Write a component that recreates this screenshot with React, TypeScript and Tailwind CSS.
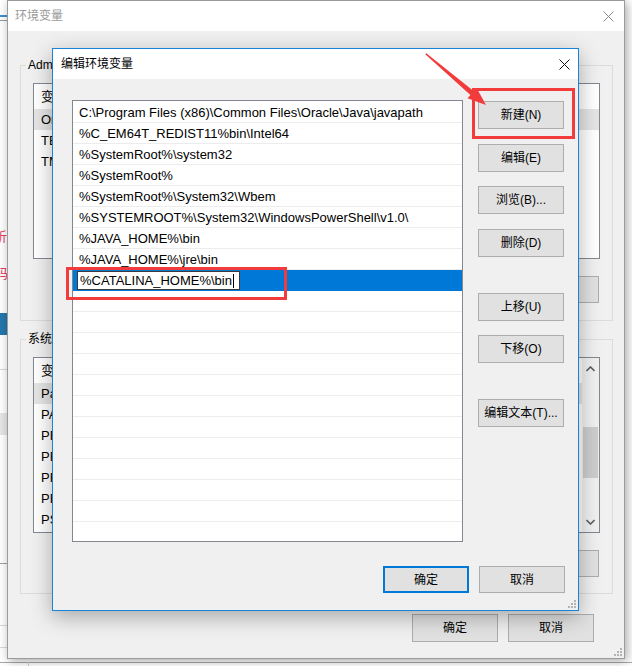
import React from 'react';

const pathRows: string[] = [
  'C:\\Program Files (x86)\\Common Files\\Oracle\\Java\\javapath',
  '%C_EM64T_REDIST11%bin\\Intel64',
  '%SystemRoot%\\system32',
  '%SystemRoot%',
  '%SystemRoot%\\System32\\Wbem',
  '%SYSTEMROOT%\\System32\\WindowsPowerShell\\v1.0\\',
  '%JAVA_HOME%\\bin',
  '%JAVA_HOME%\\jre\\bin',
];

const userVars = ['OneDrive', 'TEMP', 'TMP'];
const sysVars = [
  'Path',
  'PATHEXT',
  'PROCESSOR_ARCHITECTURE',
  'PROCESSOR_IDENTIFIER',
  'PROCESSOR_LEVEL',
  'PROCESSOR_REVISION',
  'PSModulePath',
];

const CloseIcon = ({ color }: { color: string }) => (
  <svg width="11" height="11" viewBox="0 0 11 11">
    <path d="M0.5 0.5 L10.5 10.5 M10.5 0.5 L0.5 10.5" stroke={color} strokeWidth="1" />
  </svg>
);

const Grip = () => (
  <svg width="9" height="9" viewBox="0 0 9 9">
    <rect x="7" y="1" width="2" height="2" fill="#b4b4b4" />
    <rect x="4" y="4" width="2" height="2" fill="#b4b4b4" />
    <rect x="7" y="4" width="2" height="2" fill="#b4b4b4" />
    <rect x="1" y="7" width="2" height="2" fill="#b4b4b4" />
    <rect x="4" y="7" width="2" height="2" fill="#b4b4b4" />
    <rect x="7" y="7" width="2" height="2" fill="#b4b4b4" />
  </svg>
);

const Btn = ({ label, h = 'h-[28px]', primary = false }: { label: string; h?: string; primary?: boolean }) => (
  <div
    className={`flex w-[86px] ${h} items-center justify-center bg-[#e1e1e1] text-[12px] text-black ${
      primary ? 'border-2 border-[#0078d7]' : 'border border-[#adadad]'
    }`}
  >
    {label}
  </div>
);

const VarList = ({ rows, scroll = false }: { rows: string[]; scroll?: boolean }) => (
  <div className="relative mt-[10px] h-[176px] w-[567px] overflow-hidden border border-[#828790] bg-white text-[13px] text-black">
    <div className="flex h-[25px] items-center pl-[7px]">
      <span className="w-[160px]">变量</span>
      <span>值</span>
    </div>
    {rows.map((r, i) => (
      <div key={r} className={`flex h-[21px] items-center pl-[7px] ${i === 0 ? 'bg-[#e5e5e5]' : ''}`}>
        {r}
      </div>
    ))}
    {scroll && (
      <div className="absolute top-0 right-0 bottom-0 flex w-[17px] flex-col items-center bg-[#f0f0f0]">
        <svg className="mt-[8px]" width="9" height="6" viewBox="0 0 9 6">
          <path d="M0.5 5 L4.5 1 L8.5 5" stroke="#606060" strokeWidth="1.6" fill="none" />
        </svg>
        <div className="mt-[55px] h-[51px] w-[15px] bg-[#cdcdcd]" />
        <div className="flex-1" />
        <svg className="mb-[7px]" width="9" height="6" viewBox="0 0 9 6">
          <path d="M0.5 1 L4.5 5 L8.5 1" stroke="#606060" strokeWidth="1.6" fill="none" />
        </svg>
      </div>
    )}
  </div>
);

const OuterButtons = () => (
  <div className="mt-[17px] flex justify-end gap-[10px] pr-[1px]">
    <Btn label="新建(W)..." h="h-[27px]" />
    <Btn label="编辑(I)..." h="h-[27px]" />
    <Btn label="删除(L)" h="h-[27px]" />
  </div>
);

export default function App() {
  const emptyRows = Array.from({ length: 12 });
  return (
    <div className="relative h-[666px] w-[632px] overflow-hidden bg-white font-['Liberation_Sans','Noto_Sans_CJK_SC',sans-serif]">
      {/* bits of the windows behind */}
      <div className="absolute top-[15px] left-0 h-[2px] w-[8px] bg-[#3c8fd6]" />
      <div className="absolute top-[20px] left-0 h-px w-[8px] bg-[#9a9a9a]" />
      <div className="absolute top-0 left-[221px] h-px w-[8px] bg-[#d33]" />
      <div className="absolute top-0 left-[342px] h-px w-[8px] bg-[#d33]" />
      <span className="absolute top-[227px] left-[-6px] text-[13px] text-[#e8385a]">析</span>
      <span className="absolute top-[264px] left-[-5px] text-[13px] text-[#e8385a]">码</span>
      <div className="absolute top-[313px] left-0 h-[22px] w-[8px] bg-[#2478ad]" />
      <div className="absolute top-[369px] left-0 h-px w-[8px] bg-[#d9d9d9]" />
      <div className="absolute top-[413px] left-0 h-[22px] w-[8px] bg-[#e6e6e6]" />
      <div className="absolute top-[563px] left-0 h-px w-[8px] bg-[#a0a0a0]" />
      <div className="absolute top-[625px] left-0 h-px w-[8px] bg-[#d9d9d9]" />
      <div className="absolute top-[647px] left-0 h-px w-[8px] bg-[#d9d9d9]" />
      <div className="absolute top-[662px] left-0 h-px w-[632px] bg-[#a8a8a8]" />
      <div className="absolute top-[662px] left-[28px] h-[4px] w-px bg-[#d0d0d0]" />

      {/* outer window: 环境变量 */}
      <div className="absolute top-0 left-[7px] flex h-[659px] w-[618px] flex-col border border-[#9b9b9b] bg-[#f0f0f0] shadow-[2px_2px_10px_rgba(0,0,0,0.35)]">
        <div className="flex h-[30px] items-center justify-between bg-white pr-[10px] pl-[7px]">
          <span className="text-[12px] text-[#9a9a9a]">环境变量</span>
          <CloseIcon color="#8a8a8a" />
        </div>
        <div className="relative flex flex-1 flex-col pl-[12px]">
          <fieldset className="mt-[26px] w-[592px] border border-[#dcdcdc] px-[12px] pb-[17px]">
            <legend className="ml-[-7px] px-[2px] text-[12px] leading-[16px] text-black">Administrator 的用户变量(U)</legend>
            <VarList rows={userVars} />
            <OuterButtons />
          </fieldset>
          <fieldset className="mt-[10px] w-[592px] border border-[#dcdcdc] px-[12px] pb-[16px]">
            <legend className="ml-[-7px] px-[2px] text-[12px] leading-[16px] text-black">系统变量(S)</legend>
            <VarList rows={sysVars} scroll />
            <OuterButtons />
          </fieldset>
          <div className="mt-[20px] flex justify-end gap-[10px] pr-[30px]">
            <Btn label="确定" />
            <Btn label="取消" />
          </div>
          <div className="absolute right-[2px] bottom-[2px]">
            <Grip />
          </div>
        </div>
      </div>

      {/* inner window: 编辑环境变量 */}
      <div className="absolute top-[48px] left-[52px] flex h-[563px] w-[527px] flex-col border border-[#1883d7] bg-[#f0f0f0] shadow-[0_6px_20px_rgba(0,0,0,0.3)]">
        <div className="flex h-[30px] items-center justify-between bg-white pr-[8px] pl-[8px]">
          <span className="text-[12px] text-black">编辑环境变量</span>
          <CloseIcon color="#111" />
        </div>
        <div className="relative flex flex-1 flex-col">
          <div className="flex pt-[21px] pl-[19px]">
            <div className="flex h-[442px] w-[391px] flex-col overflow-hidden border border-[#828790] bg-white pt-[1px] text-[13px] text-black">
              {pathRows.map((r) => (
                <div key={r} className="flex h-[21px] shrink-0 items-center border-b border-[#ececec] pt-[1px] pl-[6px]">
                  {r}
                </div>
              ))}
              <div className="flex h-[21px] shrink-0 items-center bg-[#0078d7]">
                <div className="ml-[4px] flex h-[19px] w-[163px] items-center border border-[#3a3a3a] bg-white pl-[2px]">
                  %CATALINA_HOME%\bin
                  <span className="ml-[1px] h-[14px] w-px bg-black" />
                </div>
              </div>
              {emptyRows.map((_, i) => (
                <div key={i} className="h-[21px] shrink-0 border-b border-[#ececec]" />
              ))}
            </div>
            <div className="ml-[15px] flex flex-col pt-[1px]">
              <Btn label="新建(N)" />
              <div className="mt-[15px]">
                <Btn label="编辑(E)" />
              </div>
              <div className="mt-[14px]">
                <Btn label="浏览(B)..." />
              </div>
              <div className="mt-[15px]">
                <Btn label="删除(D)" />
              </div>
              <div className="mt-[36px]">
                <Btn label="上移(U)" />
              </div>
              <div className="mt-[14px]">
                <Btn label="下移(O)" />
              </div>
              <div className="mt-[36px]">
                <Btn label="编辑文本(T)..." />
              </div>
            </div>
          </div>
          <div className="mt-[24px] ml-[330px] flex gap-[10px]">
            <Btn label="确定" h="h-[27px]" primary />
            <Btn label="取消" h="h-[27px]" />
          </div>
          <div className="absolute right-[2px] bottom-[2px]">
            <Grip />
          </div>
        </div>
      </div>

      {/* red annotations */}
      <div className="absolute top-[88px] left-[472px] h-[51px] w-[103px] border-[3px] border-[#f23c3c]" />
      <div className="absolute top-[267px] left-[66px] h-[33px] w-[221px] border-[3px] border-[#f23c3c]" />
      <svg className="absolute top-0 left-0" width="632" height="666" viewBox="0 0 632 666">
        <polygon
          points="426,53 473.6,91.1 476.5,87.7 486,105 467.5,98.3 470.4,94.9 425.5,54.5"
          fill="#f23c3c"
        />
      </svg>
    </div>
  );
}
